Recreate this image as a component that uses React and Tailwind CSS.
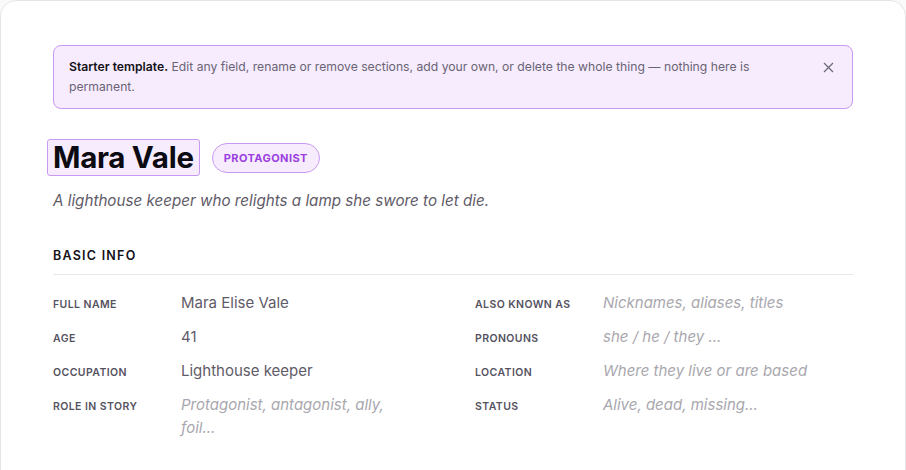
import React from "react";

const left = [
  ["Full name", "Mara Elise Vale", false],
  ["Age", "41", false],
  ["Occupation", "Lighthouse keeper", false],
  ["Role in story", "Protagonist, antagonist, ally, foil...", true],
];
const right = [
  ["Also known as", "Nicknames, aliases, titles", true],
  ["Pronouns", "she / he / they ...", true],
  ["Location", "Where they live or are based", true],
  ["Status", "Alive, dead, missing...", true],
];

function Field({ label, value, ph }) {
  return (
    <div className="flex items-baseline">
      <div className="w-32 shrink-0 text-[10.5px] font-semibold uppercase tracking-[0.04em] text-[#55525f]">{label}</div>
      <div className={ph ? "max-w-[230px] text-[15px] leading-[23px] italic text-[#a9a7ae]" : "max-w-[230px] text-[15px] leading-[23px] text-[#5f5b68]"}>{value}</div>
    </div>
  );
}

export default function App() {
  return (
    <div className="min-h-[470px] w-[906px] bg-[#fafafa]" style={{ fontFamily: "Inter, 'Liberation Sans', sans-serif" }}>
      <div className="h-[520px] rounded-2xl border border-[#e5e5e7] bg-white px-[52px] pt-11">
        <div className="flex items-start justify-between rounded-lg border border-[#c99af3] bg-[#f6ecfd] py-[11px] pl-[15px] pr-[18px]">
          <p className="w-[700px] text-[12.2px] leading-[20px] text-[#6a6475]">
            <span className="font-semibold text-[#141218]">Starter template.</span> Edit any field, rename or remove sections, add your own, or delete the whole thing — nothing here is permanent.
          </p>
          <svg width="11" height="11" viewBox="0 0 11 11" className="mt-[5px]" stroke="#6b6878" strokeWidth="1.2" fill="none">
            <path d="M1 1L10 10M10 1L1 10" />
          </svg>
        </div>

        <div className="mt-[30px] flex items-center gap-3">
          <h1 className="-ml-[6px] rounded-[3px] border border-[#c99af3] bg-[#f6ecfd] px-[5px] text-[29.5px] leading-[35px] font-bold tracking-[-0.01em] text-[#0c0a12]">Mara Vale</h1>
          <span className="rounded-full border border-[#c99af3] bg-[#f6ecfd] px-[11px] py-[7px] text-[11px] font-bold uppercase leading-[14px] tracking-[0.04em] text-[#9b3fe0]">Protagonist</span>
        </div>

        <p className="mt-[14px] text-[15.2px] italic leading-[22px] text-[#5f5b68]">A lighthouse keeper who relights a lamp she swore to let die.</p>

        <h2 className="mt-[35px] text-[12.5px] font-semibold uppercase tracking-[0.1em] text-[#141218]">Basic info</h2>
        <div className="mt-[8px] h-px bg-[#e8e7ea]" />

        <div className="mt-[16px] grid grid-cols-2 gap-x-[44px]">
          <div className="flex flex-col gap-[11px]">
            {left.map(([l, v, p]) => <Field key={l} label={l} value={v} ph={p} />)}
          </div>
          <div className="flex flex-col gap-[11px]">
            {right.map(([l, v, p]) => <Field key={l} label={l} value={v} ph={p} />)}
          </div>
        </div>
      </div>
    </div>
  );
}
